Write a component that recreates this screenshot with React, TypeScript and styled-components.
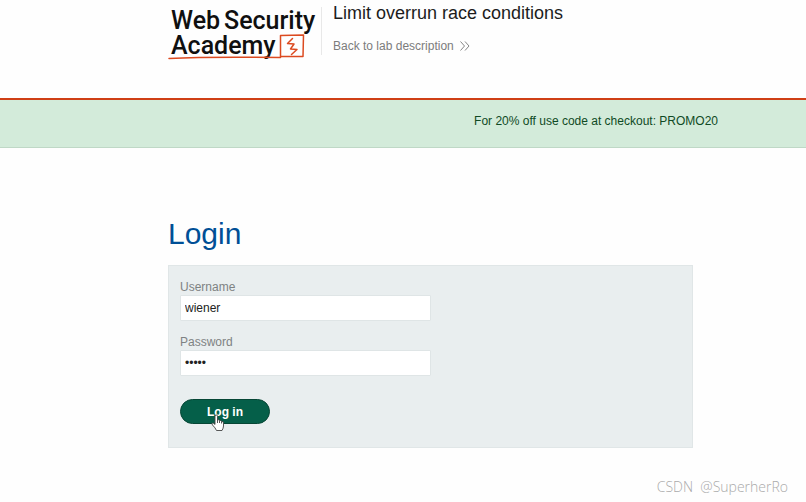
import React from "react";
import styled, { createGlobalStyle } from "styled-components";

const GlobalStyle = createGlobalStyle`
  *, *::before, *::after { box-sizing: border-box; }
  body {
    margin: 0;
    background: #fefefe;
    color: #222;
    font: 12px/16px "Liberation Sans", Arial, sans-serif;
  }
`;

const Page = styled.div`
  position: relative;
  min-height: 100vh;
`;

const Header = styled.header`
  display: flex;
  align-items: flex-start;
  height: 100px;
  padding: 0 16px 0 168px;
  border-bottom: 2px solid #cf3f15;
`;

const LogoLink = styled.a`
  display: block;
  width: 154px;
  height: 48px;
  margin-top: 7px;
  border-right: 1px solid #e8e8e8;
  flex: none;
`;

const Logo = styled.svg`
  display: block;
  overflow: visible;
  font: 500 25px "Roboto", sans-serif;
`;

const LabInfo = styled.div`
  display: flex;
  flex-direction: column;
  align-items: flex-start;
  gap: 15px;
  padding: 3px 0 0 11px;
`;

const LabTitle = styled.h2`
  margin: 0;
  font-size: 18px;
  line-height: 20px;
  font-weight: 400;
  color: #1c1c1c;
`;

const BackLink = styled.a`
  display: flex;
  align-items: center;
  gap: 6px;
  color: #7c7c7c;
  text-decoration: none;
`;

const Banner = styled.section`
  height: 48px;
  padding: 13px 88px 0 16px;
  border-bottom: 1px solid #bfd8c6;
  background: #d3ebda;
  color: #0f4a24;
  text-align: right;
`;

const Content = styled.main`
  padding: 68px 113px 53px 168px;
`;

const Heading = styled.h1`
  margin: 0 0 13px;
  font-size: 30px;
  line-height: 36px;
  font-weight: 400;
  color: #004f96;
`;

const LoginForm = styled.form`
  display: flex;
  flex-direction: column;
  align-items: flex-start;
  padding: 13px 11px 23px;
  border: 1px solid #e0e6e7;
  background: #e9eeef;
`;

const Field = styled.div`
  display: flex;
  flex-direction: column;
  width: 50%;
  min-width: 200px;
  margin-bottom: 13px;
`;

const Label = styled.label`
  color: #7e8283;
`;

const Input = styled.input`
  height: 26px;
  width: 100%;
  margin: 0;
  padding: 0 4px;
  border: 1px solid #dfe5e6;
  border-radius: 1px;
  outline: 0;
  background: #fff;
  color: #222;
  font: inherit;
`;

const Submit = styled.div`
  position: relative;
  margin-top: 10px;
`;

const Button = styled.button`
  display: block;
  width: 90px;
  height: 25px;
  padding: 0;
  border: 1px solid #064635;
  border-radius: 13px;
  background: #055f49;
  color: #fff;
  font: 700 12px/16px "Liberation Sans", Arial, sans-serif;
`;

const Pointer = styled.svg`
  position: absolute;
  left: 31px;
  top: 15px;
  pointer-events: none;
`;

const Watermark = styled.span`
  position: absolute;
  right: 18px;
  bottom: 5px;
  font: 300 14px/20px "Open Sans", sans-serif;
  color: #aaa;
  white-space: pre;
`;

function AcademyLogo() {
  return (
    <Logo width="153" height="56" viewBox="0 0 153 56" role="img" aria-label="Web Security Academy">
      <g fill="#101010">
        <text x="3" y="22">Web</text>
        <text x="56" y="22">Security</text>
        <text x="3" y="47">Academy</text>
      </g>
      <g fill="none" stroke="#dc4a20" strokeWidth="1.500" strokeLinejoin="round" strokeLinecap="round">
        <path d="M1 51.500 Q40 49.500 112.500 50.500 L112.500 28.500 L135.500 28 L135 49.500 L113 49.500" />
        <path d="M124.500 31.500 L119.500 36.500 L126 37 L122.500 42 L129 42.500 L123.500 47.500" />
      </g>
    </Logo>
  );
}

export default function App() {
  return (
    <Page>
      <GlobalStyle />
      <Header>
        <LogoLink href="#academy"><AcademyLogo /></LogoLink>
        <LabInfo>
          <LabTitle>Limit overrun race conditions</LabTitle>
          <BackLink href="#lab">
            Back to lab description
            <svg width="10" height="10" viewBox="0 0 10 10" fill="none" stroke="#858585" aria-hidden="true">
              <path d="M0.500 0.500 L4.500 5 L0.500 9.500 M5 0.500 L9 5 L5 9.500" />
            </svg>
          </BackLink>
        </LabInfo>
      </Header>
      <Banner>For 20% off use code at checkout: PROMO20</Banner>
      <Content>
        <Heading>Login</Heading>
        <LoginForm onSubmit={(event) => event.preventDefault()}>
          <Field>
            <Label htmlFor="username">Username</Label>
            <Input id="username" type="text" defaultValue="wiener" />
          </Field>
          <Field>
            <Label htmlFor="password">Password</Label>
            <Input id="password" type="password" defaultValue="peter" />
          </Field>
          <Submit>
            <Button type="submit">Log in</Button>
            <Pointer width="14" height="18" viewBox="0 0 14 18" aria-hidden="true">
              <path
                d="M4 10.500 V2.500 Q4 1 5.300 1 Q6.500 1 6.500 2.500 V6 Q8 5.200 8.500 6.600 Q10.200 6 10.500 7.400 Q12.500 7 12.500 9 V12 Q12.500 14 11 16.500 H5.500 Q4.500 14 1.500 11 Q0.300 9.500 1.500 9 Q2.500 8.700 4 10.500 Z M6.500 6 V9 M8.500 6.600 V9 M10.500 7.400 V9.500"
                fill="#fff"
                stroke="#444"
                strokeWidth="0.900"
                strokeLinejoin="round"
              />
            </Pointer>
          </Submit>
        </LoginForm>
      </Content>
      <Watermark>{"CSDN  @SuperherRo"}</Watermark>
    </Page>
  );
}
